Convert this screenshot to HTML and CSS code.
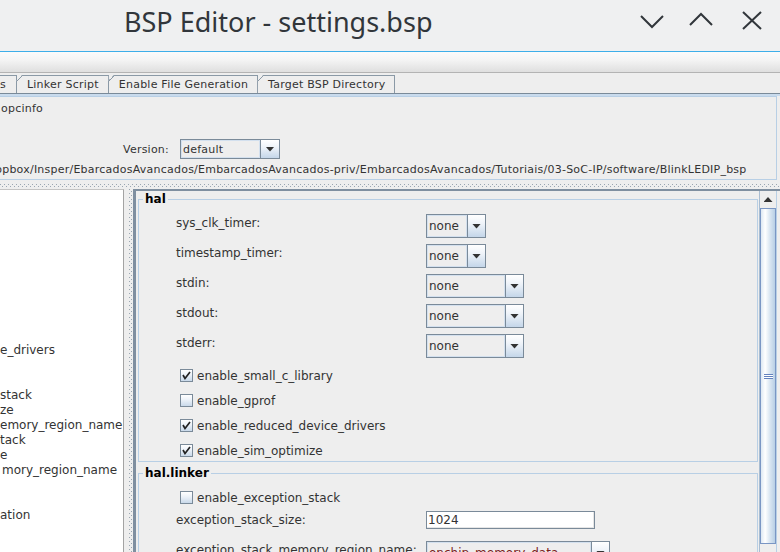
FILE: index.html
```html
<!DOCTYPE html>
<html>
<head>
<meta charset="utf-8">
<title>BSP Editor - settings.bsp</title>
<link rel="stylesheet" href="styles.css">
</head>
<body>
<div class="window">
  <header class="titlebar">
    <div class="title">BSP Editor - settings.bsp</div>
    <div class="controls">
      <svg class="ctl" width="24" height="20" viewBox="0 0 24 20"><polyline points="1,5 12,16 23,5"/></svg>
      <svg class="ctl" width="24" height="20" viewBox="0 0 24 20"><polyline points="1,14 12,3 23,14"/></svg>
      <svg class="ctl close" width="22" height="20" viewBox="0 0 22 20"><line x1="2" y1="1" x2="20" y2="18"/><line x1="20" y1="1" x2="2" y2="18"/></svg>
    </div>
  </header>
  <div class="menubar"></div>
  <div class="tabrow">
    <div class="tab first">s</div>
    <div class="tab">Linker Script</div>
    <div class="tab">Enable File Generation</div>
    <div class="tab">Target BSP Directory</div>
  </div>
  <div class="tabline"></div>
  <section class="infopanel">
    <div class="info-line">opcinfo</div>
    <div class="version-row">
      <span class="version-label">Version:</span>
      <div class="combo small-h version-combo">
        <span class="combo-text">default</span>
        <span class="combo-btn"><i class="arrow-down"></i></span>
      </div>
    </div>
    <div class="path-line"><span class="path">Dropbox/Insper/EbarcadosAvancados/EmbarcadosAvancados-priv/EmbarcadosAvancados/Tutoriais/03-SoC-IP/software/BlinkLEDIP_bsp</span></div>
  </section>
  <div class="hsplit"></div>
  <div class="main">
    <div class="tree">
      <ul class="tree-list">
        <li></li><li></li><li></li><li></li><li></li>
        <li></li><li></li><li></li><li></li><li></li>
        <li>e_drivers</li>
        <li></li><li></li>
        <li>stack</li>
        <li>ze</li>
        <li>emory_region_name</li>
        <li>tack</li>
        <li>e</li>
        <li class="shift">mory_region_name</li>
        <li></li><li></li>
        <li>ation</li>
      </ul>
    </div>
    <div class="vsplit"></div>
    <div class="scrollpane">
      <div class="viewport">
        <fieldset class="group">
          <legend>hal</legend>
          <div class="props">
            <span class="label">sys_clk_timer:</span>
            <div class="combo w-small"><span class="combo-text">none</span><span class="combo-btn"><i class="arrow-down"></i></span></div>
            <span class="label">timestamp_timer:</span>
            <div class="combo w-small"><span class="combo-text">none</span><span class="combo-btn"><i class="arrow-down"></i></span></div>
            <span class="label">stdin:</span>
            <div class="combo w-large"><span class="combo-text">none</span><span class="combo-btn"><i class="arrow-down"></i></span></div>
            <span class="label">stdout:</span>
            <div class="combo w-large"><span class="combo-text">none</span><span class="combo-btn"><i class="arrow-down"></i></span></div>
            <span class="label">stderr:</span>
            <div class="combo w-large"><span class="combo-text">none</span><span class="combo-btn"><i class="arrow-down"></i></span></div>
          </div>
          <div class="checks">
            <label class="check"><span class="box"><svg width="11" height="11" viewBox="0 0 11 11"><polyline points="2,5 4,8.5 9,2"/></svg></span>enable_small_c_library</label>
            <label class="check"><span class="box"></span>enable_gprof</label>
            <label class="check"><span class="box"><svg width="11" height="11" viewBox="0 0 11 11"><polyline points="2,5 4,8.5 9,2"/></svg></span>enable_reduced_device_drivers</label>
            <label class="check"><span class="box"><svg width="11" height="11" viewBox="0 0 11 11"><polyline points="2,5 4,8.5 9,2"/></svg></span>enable_sim_optimize</label>
          </div>
        </fieldset>
        <fieldset class="group linker">
          <legend>hal.linker</legend>
          <div class="checks first-checks">
            <label class="check"><span class="box"></span>enable_exception_stack</label>
          </div>
          <div class="props props-linker">
            <span class="label">exception_stack_size:</span>
            <div class="textfield">1024</div>
            <span class="label">exception_stack_memory_region_name:</span>
            <div class="combo w-mem"><span class="combo-text mem">onchip_memory_data</span><span class="combo-btn"><i class="arrow-down"></i></span></div>
          </div>
        </fieldset>
      </div>
      <div class="scrollbar">
        <div class="sb-up"><i class="arrow-up"></i></div>
        <div class="sb-thumb"><i class="grip"></i></div>
        <div class="sb-track"></div>
      </div>
      <div class="tail"></div>
    </div>
  </div>
</div>
</body>
</html>
```

FILE: styles.css
```css
* { box-sizing: border-box; }
html, body { margin: 0; padding: 0; }
body {
  width: 780px;
  height: 552px;
  overflow: hidden;
  background: #eeeeee;
  font-family: "DejaVu Sans", sans-serif;
  color: #333333;
}
.window {
  width: 780px;
  height: 552px;
  display: flex;
  flex-direction: column;
  overflow: hidden;
}

/* title bar */
.titlebar {
  height: 52px;
  flex: none;
  background: #eff0f1;
  border-bottom: 1px solid #3daee9;
  display: flex;
  align-items: flex-start;
}
.title {
  margin-left: 124px;
  font-family: "Noto Sans", sans-serif;
  font-size: 27px;
  line-height: 44px;
  color: #31363b;
  white-space: nowrap;
}
.controls {
  margin-left: auto;
  display: flex;
  padding-top: 11px;
  padding-right: 17px;
}
.ctl { fill: none; stroke: #31363b; stroke-width: 2; }
.ctl + .ctl { margin-left: 25px; }
.ctl.close { margin-left: 28px; }

.menubar {
  height: 21px;
  flex: none;
  background: linear-gradient(#fbfbfb, #f4f4f4 40%, #dfdfdf);
  border-bottom: 1px solid #b3b3b3;
}

/* tabs */
.tabrow {
  margin-top: 2px;
  height: 18px;
  flex: none;
  display: flex;
}
.tab {
  height: 18px;
  border: 1px solid #8a99a6;
  border-bottom: none;
  margin-right: -1px;
  padding: 0 9px 0 10px;
  font-size: 11px;
  letter-spacing: 0.23px;
  line-height: 17px;
  white-space: nowrap;
  clip-path: polygon(6px 0, 100% 0, 100% 100%, 0 100%, 0 6px);
  background:
    linear-gradient(to bottom right, transparent 50%, #8a99a6 50%, #8a99a6 calc(50% + 1.2px), transparent calc(50% + 1.2px)) 0 0 / 6px 6px no-repeat border-box,
    #eeeeee;
}
.tab.first {
  border-left: none;
  padding-left: 0;
  padding-right: 10px;
  clip-path: none;
  background: #eeeeee;
}
.tabline {
  height: 3px;
  flex: none;
  border-top: 1px solid #7a8a99;
  background: #c9dbed;
}

/* info panel */
.infopanel {
  flex: none;
  height: 84px;
  margin-right: 3px;
  border: 1px solid #b8cfe5;
  border-left: none;
  padding: 5px 0 3px;
  display: flex;
  flex-direction: column;
  font-size: 11px;
  letter-spacing: 0.23px;
  line-height: 13px;
}
.info-line { height: 13px; padding-left: 1px; }
.version-row {
  margin-top: 24px;
  height: 20px;
  display: flex;
  align-items: center;
}
.version-label { width: 57px; margin-left: 123px; flex: none; }
.path-line {
  margin-top: 4px;
  height: 13px;
  white-space: nowrap;
  overflow: hidden;
}
.path { display: inline-block; margin-left: -18px; }

/* splitters */
.hsplit {
  height: 9px;
  flex: none;
  background:
    linear-gradient(90deg, #9aa6b2 1px, transparent 1px) 0 4px / 4px 1px repeat-x,
    linear-gradient(90deg, #9aa6b2 1px, transparent 1px) 2px 6px / 4px 1px repeat-x,
    #eeeeee;
}
.main {
  flex: 1;
  min-height: 0;
  display: flex;
}
.tree {
  width: 124px;
  flex: none;
  background: #ffffff;
  border-right: 1px solid #a3a3a3;
  border-top: 1px solid #c4c4c4;
  overflow: hidden;
}
.tree-list {
  list-style: none;
  margin: 0;
  padding: 3px 0 0;
  font-size: 12px;
  line-height: 15px;
  white-space: nowrap;
}
.tree-list li { height: 15px; }
.tree-list li.shift { padding-left: 2px; }
.vsplit {
  width: 9px;
  flex: none;
  background:
    linear-gradient(180deg, #9aa6b2 1px, transparent 1px) 5px 0 / 1px 4px repeat-y,
    linear-gradient(180deg, #9aa6b2 1px, transparent 1px) 7px 2px / 1px 4px repeat-y,
    #eeeeee;
}

/* scroll pane */
.scrollpane {
  flex: 1;
  min-width: 0;
  display: flex;
  border-top: 2px solid #7f8fa0;
  border-left: 3px solid #7f8fa0;
}
.viewport {
  flex: 1;
  min-width: 0;
  overflow: hidden;
}
.scrollbar {
  width: 17px;
  flex: none;
  display: flex;
  flex-direction: column;
  background: #eeeeee;
  border-left: 1px solid #a9bdd2;
}
.sb-up {
  height: 17px;
  flex: none;
  display: flex;
  align-items: center;
  justify-content: center;
  background: #eeeeee;
}
.arrow-up {
  width: 9px;
  height: 5px;
  background: #333333;
  clip-path: polygon(50% 0, 100% 100%, 0 100%);
}
.sb-thumb {
  height: 336px;
  flex: none;
  border: 1px solid #7a96c4;
  background: linear-gradient(90deg, #dde8f3, #ffffff 30%, #dde8f3 60%, #b8cfe5);
  display: flex;
  align-items: center;
  justify-content: center;
}
.grip {
  width: 9px;
  height: 5px;
  background: repeating-linear-gradient(#6382bf 0 1px, #ffffff 1px 2px);
}
.sb-track { flex: 1; }
.tail {
  width: 4px;
  flex: none;
  background: #eeeeee;
  border-left: 1px solid #b8cfe5;
}

/* group boxes */
.group {
  margin: 1px 1px 0 2px;
  padding: 8px 0 0 4px;
  border: 1px solid #b8cfe5;
  min-width: 0;
}
.group.linker { margin-top: 4px; padding-top: 6px; }
.group legend {
  padding: 0 2px;
  font-weight: bold;
  font-size: 12px;
  line-height: 14px;
  color: #000000;
}
.props {
  display: grid;
  grid-template-columns: 250px auto;
  row-gap: 6px;
  padding-left: 33px;
  align-items: start;
  justify-items: start;
  font-size: 12px;
  line-height: 14px;
}
.props-linker { margin-top: 3px; row-gap: 12px; }
.label { white-space: nowrap; padding-top: 2px; }

.checks {
  margin-top: 6px;
  display: flex;
  flex-direction: column;
  row-gap: 3px;
  padding-left: 37px;
}
.checks.first-checks { margin-top: 0; }
.check {
  height: 22px;
  display: flex;
  align-items: center;
  padding-top: 1px;
  font-size: 12px;
  white-space: nowrap;
}
.box {
  width: 13px;
  height: 13px;
  flex: none;
  margin-right: 4px;
  border: 1px solid #7a8a99;
  background: linear-gradient(#ffffff, #eef3f9 40%, #c9d9ea);
  display: flex;
}
.box svg { fill: none; stroke: #222222; stroke-width: 1.7; }

/* combo boxes */
.combo {
  display: flex;
  height: 24px;
  border: 1px solid #7a8a99;
  background: #eeeeee;
  font-size: 12px;
}
.combo.small-h { height: 20px; font-size: 11px; }
.version-combo { width: 100px; }
.w-small { width: 60px; }
.w-large { width: 98px; }
.w-mem { width: 184px; }
.combo-text {
  flex: 1;
  min-width: 0;
  display: flex;
  align-items: center;
  padding-left: 1px;
  border: 1px solid #d3e0ee;
  white-space: nowrap;
  overflow: hidden;
}
.combo-text.mem { color: #7d1d1d; }
.combo-btn {
  width: 18px;
  flex: none;
  border-left: 1px solid #7a8a99;
  background: linear-gradient(#ffffff, #eef3f9 40%, #c4d6e9);
  display: flex;
  align-items: center;
  justify-content: center;
}
.small-h .combo-btn { width: 19px; }
.arrow-down {
  width: 9px;
  height: 5px;
  background: #333333;
  clip-path: polygon(0 0, 100% 0, 50% 100%);
}
.textfield {
  width: 169px;
  height: 18px;
  background: #ffffff;
  border: 1px solid #7a8a99;
  box-shadow: inset -1px -1px 0 #e6e6e6;
  padding-left: 1px;
  font-size: 12px;
  line-height: 16px;
}
```
